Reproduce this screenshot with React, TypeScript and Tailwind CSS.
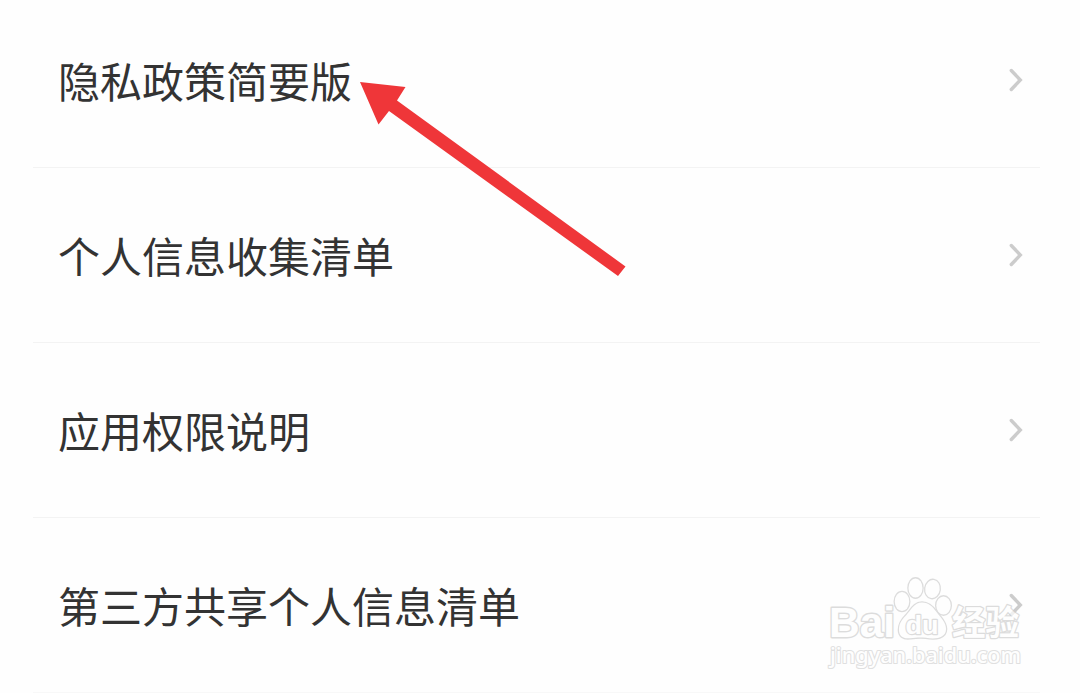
import clsx from "clsx";

interface PolicyItem {
  id: string;
  title: string;
}

const items: PolicyItem[] = [
  { id: "privacy", title: "隐私政策简要版" },
  { id: "collection", title: "个人信息收集清单" },
  { id: "permissions", title: "应用权限说明" },
  { id: "sharing", title: "第三方共享个人信息清单" },
];

function Chevron() {
  return (
    <svg width="16" height="26" viewBox="0 0 16 26" fill="none" className="mr-1 mb-px">
      <path d="M3.3 3.5 12.3 13 3.3 22.5" stroke="#cccccc" strokeWidth="3.4" strokeLinecap="round" />
    </svg>
  );
}

function PolicyRow({ item, last }: { item: PolicyItem; last: boolean }) {
  return (
    <li
      className={clsx(
        "flex h-[175px] items-center justify-between border-b pr-3 pl-[25px]",
        last ? "border-[#f8f8f8]" : "border-[#f3f3f3]"
      )}
    >
      <span className="text-[42px] leading-[60px] whitespace-nowrap text-[#333333]">{item.title}</span>
      <Chevron />
    </li>
  );
}

function Arrow() {
  return (
    <svg width="270" height="200" viewBox="0 0 270 200" className="absolute top-[80px] left-[358px]">
      <path d="M2 2 47.5 7 39 20.5 267.5 186.5 260 196 31 31 20.5 44.5Z" fill="#ef3639" />
    </svg>
  );
}

function Watermark() {
  return (
    <svg
      width="210"
      height="110"
      viewBox="820 570 210 110"
      className="absolute top-[570px] left-[820px] opacity-70"
      fill="#ffffff"
      stroke="#cfcfcf"
      strokeWidth="2.8"
      strokeLinejoin="round"
      paintOrder="stroke"
    >
      <text x="829" y="636.5" fontFamily="Liberation Sans" fontWeight="700" fontSize="43" textLength="66" lengthAdjust="spacingAndGlyphs">
        Bai
      </text>
      <g strokeWidth="2.6">
        <ellipse cx="902" cy="601.5" rx="7.2" ry="9.4" />
        <ellipse cx="915.5" cy="588" rx="7" ry="9.6" />
        <ellipse cx="932.5" cy="589" rx="7.2" ry="9.1" transform="rotate(8 932.5 589)" />
        <ellipse cx="943.5" cy="605.5" rx="7.2" ry="9.1" />
        <path d="M922 602.5C914 602.5 911 610 906 615.5C901 620.5 899 624 899 630C899 636 903 639 910 638.2C916 637.5 920 637 926 637.8C936 639.5 946 638 946 629C946 622 941 618 936.5 612C933 607 929 602.5 922 602.5Z" />
      </g>
      <text x="905.5" y="633.5" fontFamily="Liberation Sans" fontWeight="700" fontSize="25" textLength="33" lengthAdjust="spacingAndGlyphs" strokeWidth="2.4">
        du
      </text>
      <text x="952" y="635" fontFamily="Noto Sans CJK SC" fontWeight="700" fontSize="34" textLength="67" lengthAdjust="spacingAndGlyphs" strokeWidth="2.6">
        经验
      </text>
      <text x="830" y="663" fontFamily="Noto Sans" fontWeight="500" fontSize="22" textLength="191" lengthAdjust="spacingAndGlyphs" strokeWidth="2.2" stroke="#d4d4d4">
        jingyan.baidu.com
      </text>
    </svg>
  );
}

export default function App() {
  return (
    <main className="relative h-[693px] w-[1080px] overflow-hidden bg-[#fefefe] font-['Noto_Sans_CJK_SC',sans-serif]">
      <ul className="mt-[-7px] mr-10 ml-[33px]">
        {items.map((item, index) => (
          <PolicyRow key={item.id} item={item} last={index === items.length - 1} />
        ))}
      </ul>
      <Arrow />
      <Watermark />
    </main>
  );
}
